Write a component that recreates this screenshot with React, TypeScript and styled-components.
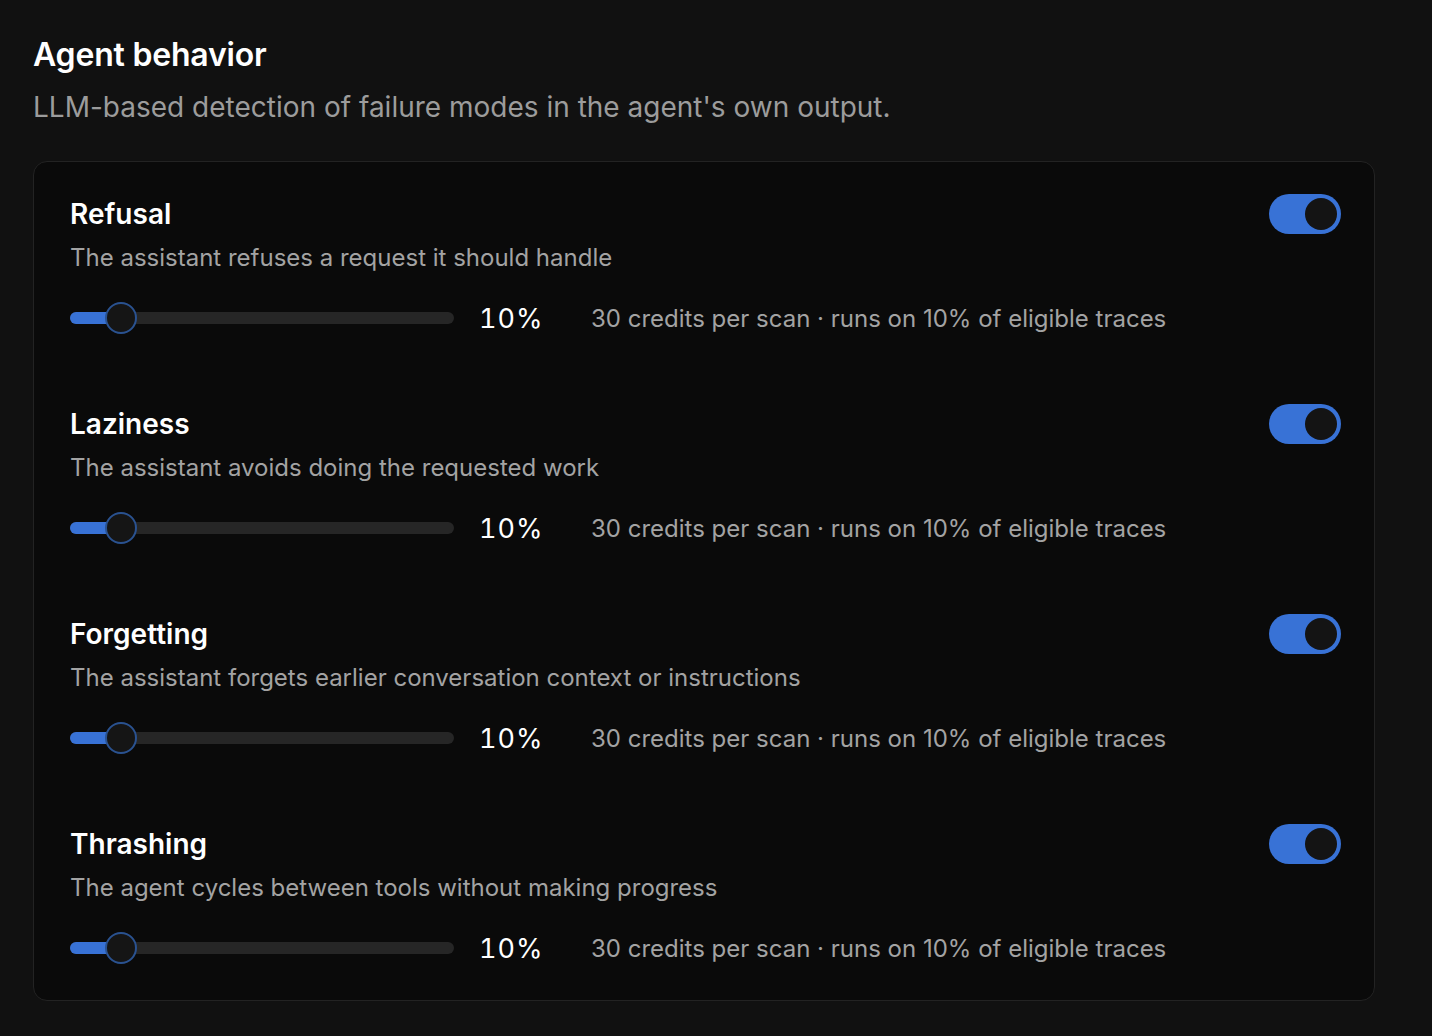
import React, { useState } from "react";
import styled, { createGlobalStyle } from "styled-components";

const GlobalStyle = createGlobalStyle`
  html, body {
    margin: 0;
    padding: 0;
    background: #111111;
  }
  body {
    font-family: Inter, "Noto Sans", sans-serif;
    color: #f2f2f2;
    -webkit-font-smoothing: antialiased;
  }
`;

type Detector = {
  name: string;
  description: string;
  rate: number;
  credits: number;
};

const detectors: Detector[] = [
  { name: "Refusal", description: "The assistant refuses a request it should handle", rate: 10, credits: 30 },
  { name: "Laziness", description: "The assistant avoids doing the requested work", rate: 10, credits: 30 },
  { name: "Forgetting", description: "The assistant forgets earlier conversation context or instructions", rate: 10, credits: 30 },
  { name: "Thrashing", description: "The agent cycles between tools without making progress", rate: 10, credits: 30 },
];

const DetectorRow = ({ item }: { item: Detector }) => {
  const [on, setOn] = useState(true);
  const pos = (item.rate / 75) * 100;
  return (
    <Row>
      <RowHead>
        <Title>{item.name}</Title>
        <Toggle $on={on} onClick={() => setOn(!on)}>
          <Knob />
        </Toggle>
      </RowHead>
      <Desc>{item.description}</Desc>
      <SliderRow>
        <Track>
          <Fill style={{ width: `${pos}%` }} />
          <Thumb style={{ left: `${pos}%` }} />
        </Track>
        <Percent>{item.rate}%</Percent>
        <Meta>
          {item.credits} credits per scan · runs on {item.rate}% of eligible traces
        </Meta>
      </SliderRow>
    </Row>
  );
};

const App = () => {
  return (
    <Page>
      <GlobalStyle />
      <Heading>Agent behavior</Heading>
      <Subtitle>LLM-based detection of failure modes in the agent's own output.</Subtitle>
      <Card>
        {detectors.map((d) => (
          <DetectorRow key={d.name} item={d} />
        ))}
      </Card>
    </Page>
  );
};

export default App;

const Page = styled.div`
  padding: 36px 57px 36px 33px;
  min-height: 1036px;
  box-sizing: border-box;
`;

const Heading = styled.h1`
  margin: 0;
  font-size: 32px;
  line-height: 38px;
  font-weight: 600;
  color: #ffffff;
  letter-spacing: -0.2px;
`;

const Subtitle = styled.p`
  margin: 16px 0 0;
  font-size: 28px;
  line-height: 34px;
  color: #9c9c9c;
`;

const Card = styled.div`
  margin-top: 37px;
  background: #0a0a0a;
  border: 1.5px solid #232323;
  border-radius: 14px;
  padding: 32px 33px 32px 36px;
  display: flex;
  flex-direction: column;
  gap: 66px;
`;

const Row = styled.div`
  display: flex;
  flex-direction: column;
`;

const RowHead = styled.div`
  display: flex;
  align-items: center;
  justify-content: space-between;
`;

const Title = styled.div`
  font-size: 28px;
  line-height: 34px;
  font-weight: 600;
  color: #ffffff;
`;

const Toggle = styled.button<{ $on: boolean }>`
  width: 72px;
  height: 40px;
  border: none;
  border-radius: 20px;
  padding: 4px;
  background: ${(p) => (p.$on ? "#3872d6" : "#2a2a2a")};
  display: flex;
  justify-content: ${(p) => (p.$on ? "flex-end" : "flex-start")};
  align-items: center;
  cursor: pointer;
  box-sizing: border-box;
`;

const Knob = styled.span`
  width: 32px;
  height: 32px;
  border-radius: 50%;
  background: #141414;
`;

const Desc = styled.div`
  margin-top: 7px;
  font-size: 24px;
  line-height: 34px;
  color: #a3a3a3;
`;

const SliderRow = styled.div`
  margin-top: 23px;
  height: 40px;
  display: flex;
  align-items: center;
`;

const Track = styled.div`
  position: relative;
  width: 384px;
  height: 12px;
  border-radius: 6px;
  background: #262626;
  flex-shrink: 0;
`;

const Fill = styled.div`
  height: 100%;
  border-radius: 6px 0 0 6px;
  background: #3872d6;
`;

const Thumb = styled.div`
  position: absolute;
  top: 50%;
  width: 32px;
  height: 32px;
  border-radius: 50%;
  background: #151515;
  border: 2px solid #2a5290;
  box-sizing: border-box;
  transform: translate(-50%, -50%);
`;

const Percent = styled.div`
  margin-left: 25px;
  width: 112px;
  font-size: 27px;
  letter-spacing: 1px;
  font-variant-numeric: tabular-nums;
  color: #ffffff;
  flex-shrink: 0;
`;

const Meta = styled.div`
  font-size: 24px;
  color: #a3a3a3;
  white-space: nowrap;
`;
